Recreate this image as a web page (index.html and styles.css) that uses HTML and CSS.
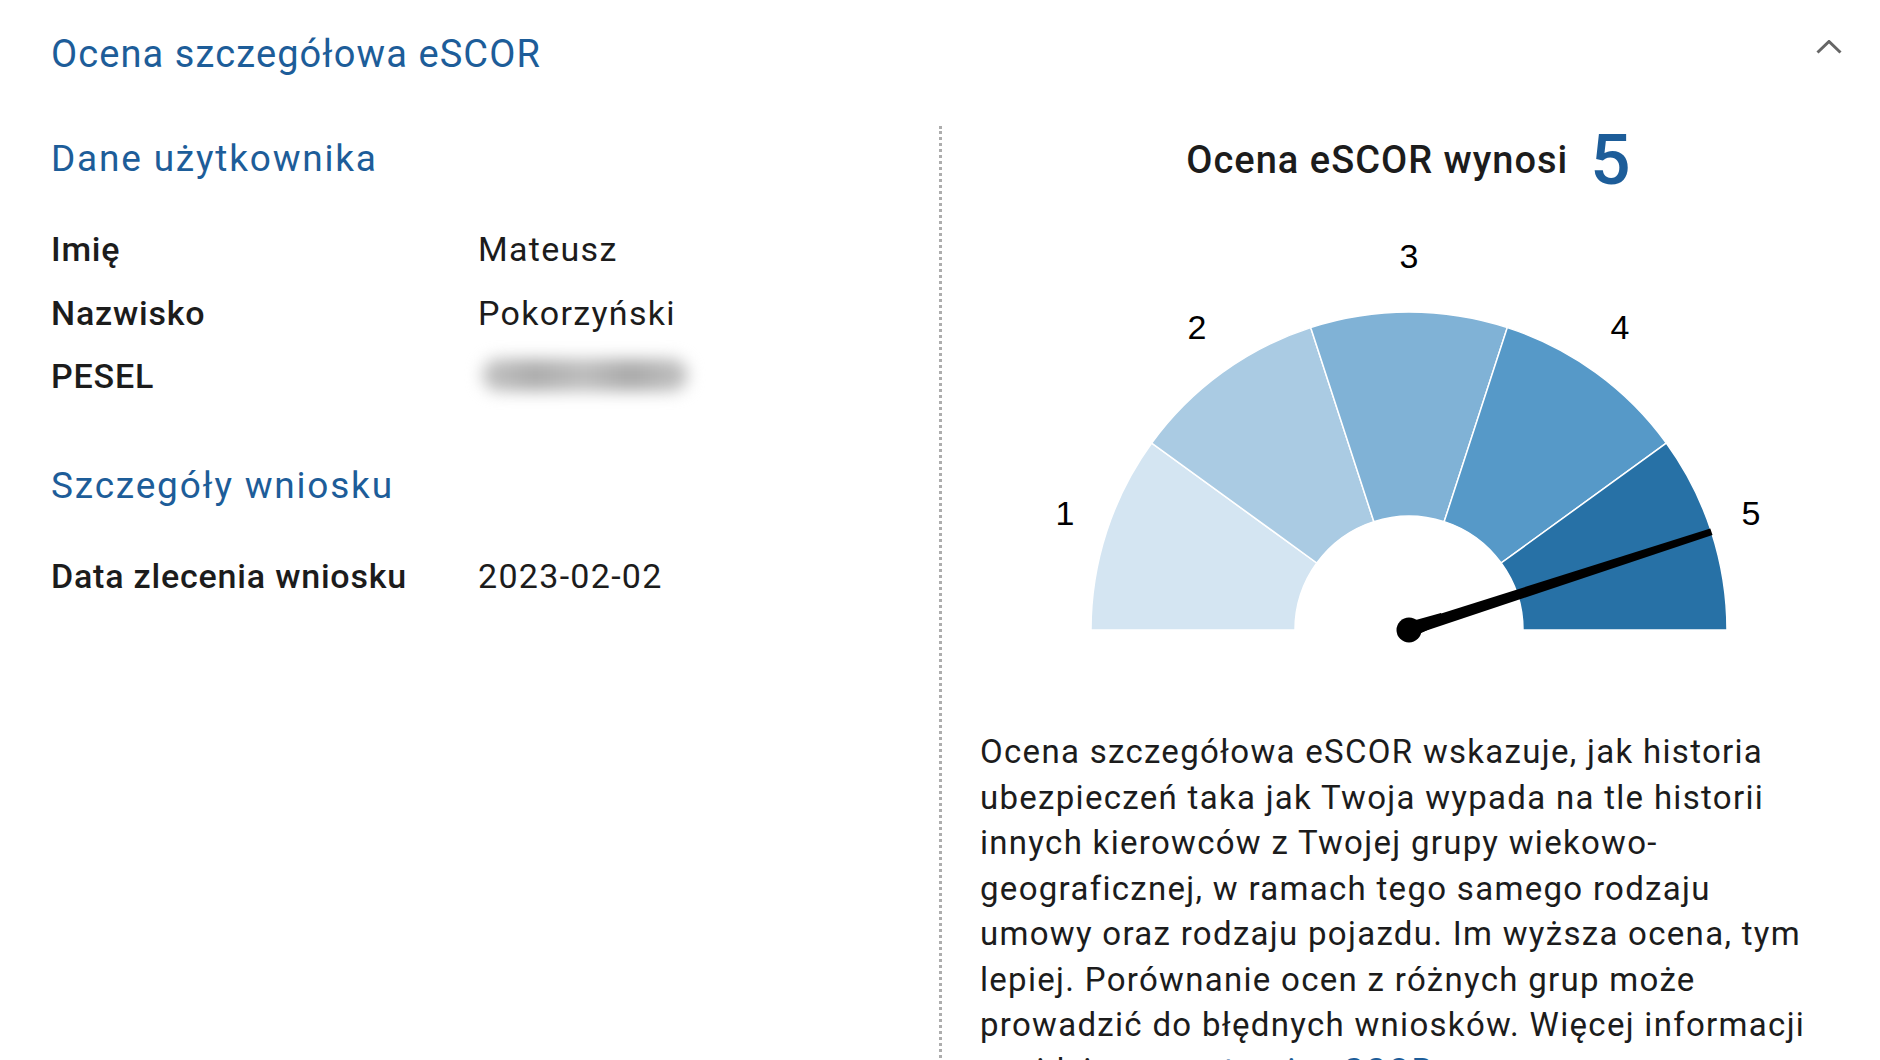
FILE: index.html
```html
<!DOCTYPE html>
<html lang="pl">
<head>
    <meta charset="UTF-8">
    <meta name="viewport" content="width=device-width, initial-scale=1.0">
    <title>Ocena szczegółowa eSCOR</title>
    <link rel="stylesheet" href="styles.css">
</head>
<body>
    <section class="panel">
        <header class="panel-header">
            <h2 class="panel-title">Ocena szczegółowa eSCOR</h2>
            <button class="toggle" aria-label="Zwiń">
                <svg width="26" height="14" viewBox="0 0 26 14">
                    <polyline points="1.5,12.5 13,1.5 24.5,12.5" fill="none" stroke="#666" stroke-width="3"/>
                </svg>
            </button>
        </header>

        <div class="panel-body">
            <!-- Dane po lewej stronie -->
            <div class="col-left">
                <h3 class="section-title">Dane użytkownika</h3>
                <dl class="data-list">
                    <dt>Imię</dt>
                    <dd>Mateusz</dd>
                    <dt>Nazwisko</dt>
                    <dd>Pokorzyński</dd>
                    <dt>PESEL</dt>
                    <dd><span class="blurred"></span></dd>
                </dl>

                <h3 class="section-title section-title--next">Szczegóły wniosku</h3>
                <dl class="data-list">
                    <dt>Data zlecenia wniosku</dt>
                    <dd>2023-02-02</dd>
                </dl>
            </div>

            <!-- Wskaźnik oceny -->
            <div class="col-right">
                <div class="score-title">
                    <span>Ocena eSCOR wynosi</span>
                    <span class="score-value">5</span>
                </div>

                <svg class="gauge" width="840" height="420" viewBox="0 0 840 420">
                    <g stroke="#fff" stroke-width="1.5">
                        <path d="M102 400 A318 318 0 0 1 162.7 213.1 L327.8 333 A114 114 0 0 0 306 400 Z" fill="#d4e5f2"/>
                        <path d="M162.7 213.1 A318 318 0 0 1 321.7 97.6 L384.8 291.6 A114 114 0 0 0 327.8 333 Z" fill="#aacbe3"/>
                        <path d="M321.7 97.6 A318 318 0 0 1 518.3 97.6 L455.2 291.6 A114 114 0 0 0 384.8 291.6 Z" fill="#80b2d6"/>
                        <path d="M518.3 97.6 A318 318 0 0 1 677.3 213.1 L512.2 333 A114 114 0 0 0 455.2 291.6 Z" fill="#5699c8"/>
                        <path d="M677.3 213.1 A318 318 0 0 1 738 400 L534 400 A114 114 0 0 0 512.2 333 Z" fill="#2771a6"/>
                    </g>
                    <g class="gauge-labels">
                        <text x="76" y="283">1</text>
                        <text x="208" y="97">2</text>
                        <text x="420" y="26">3</text>
                        <text x="631" y="97">4</text>
                        <text x="762" y="283">5</text>
                    </g>
                    <polygon points="421.9,405.7 418.1,394.3 721.3,298.4 723.5,305" fill="#000"/>
                    <polygon points="424,407 416,393 452,383 455,392" fill="#000"/>
                    <circle cx="420" cy="400" r="12.5" fill="#000"/>
                </svg>

                <p class="score-desc">
                    Ocena szczegółowa eSCOR wskazuje, jak historia<br>
                    ubezpieczeń taka jak Twoja wypada na tle historii<br>
                    innych kierowców z Twojej grupy wiekowo-<br>
                    geograficznej, w ramach tego samego rodzaju<br>
                    umowy oraz rodzaju pojazdu. Im wyższa ocena, tym<br>
                    lepiej. Porównanie ocen z różnych grup może<br>
                    prowadzić do błędnych wniosków. Więcej informacji<br>
                    znajdziesz na <a href="#">stronie eSCOR</a>.
                </p>
            </div>
        </div>
    </section>
</body>
</html>
```

FILE: styles.css
```css
body {
    margin: 0;
    padding: 0;
    background: #fff;
    font-family: Roboto, "Liberation Sans", Arial, sans-serif;
    color: #1c1c1c;
}
.panel {
    width: 1880px;
    overflow: hidden;
}
.panel-header {
    display: flex;
    justify-content: space-between;
    align-items: flex-start;
    padding: 31px 38px 49px 51px;
}
.panel-title {
    margin: 0;
    font-size: 38px;
    line-height: 46px;
    font-weight: 400;
    letter-spacing: 1.1px;
    color: #1d5d99;
}
.toggle {
    margin-top: 9px;
    padding: 0;
    border: 0;
    background: none;
    cursor: pointer;
    line-height: 0;
}
.panel-body {
    display: flex;
    align-items: stretch;
}
.col-left {
    box-sizing: border-box;
    width: 942px;
    padding: 10px 0 0 51px;
    border-right: 3px dotted #adadad;
}
.section-title {
    margin: 0;
    font-size: 37px;
    line-height: 46px;
    font-weight: 400;
    letter-spacing: 1.8px;
    color: #1d5d99;
}
.section-title--next {
    margin-top: 54.5px;
}
.data-list {
    display: grid;
    grid-template-columns: 427px 1fr;
    grid-auto-rows: 63.5px;
    margin: 36px 0 0;
    font-size: 34px;
    line-height: 63.5px;
}
.data-list dt {
    font-weight: 500;
    letter-spacing: 0.8px;
}
.data-list dd {
    margin: 0;
    letter-spacing: 1.3px;
    display: flex;
    align-items: center;
}
.blurred {
    display: block;
    width: 206px;
    height: 32px;
    margin: -3px 0 0 4px;
    border-radius: 16px;
    background: linear-gradient(90deg, #c4c4c4, #acacac 25%, #bdbdbd 50%, #a9a9a9 72%, #c2c2c2);
    filter: blur(8px);
}
.col-right {
    flex: 1;
    display: flex;
    flex-direction: column;
    align-items: center;
    padding: 0 42px 0 38px;
}
.score-title {
    display: flex;
    align-items: center;
    gap: 22px;
    margin-top: 11px;
    font-size: 38px;
    line-height: 46px;
    font-weight: 500;
    letter-spacing: 1px;
    color: #1c1c1c;
}
.score-value {
    font-size: 71px;
    font-weight: 500;
    color: #1d5d99;
}
.gauge {
    display: block;
    margin-top: 47px;
}
.gauge-labels text {
    font-family: "Liberation Sans", Arial, sans-serif;
    font-size: 34px;
    fill: #000;
    text-anchor: middle;
    dominant-baseline: central;
}
.score-desc {
    align-self: stretch;
    margin: 79px 0 0;
    font-size: 33px;
    line-height: 45.5px;
    letter-spacing: 1.3px;
    color: #1c1c1c;
    white-space: nowrap;
}
.score-desc a {
    color: #1d5d99;
    text-decoration: none;
}
```
